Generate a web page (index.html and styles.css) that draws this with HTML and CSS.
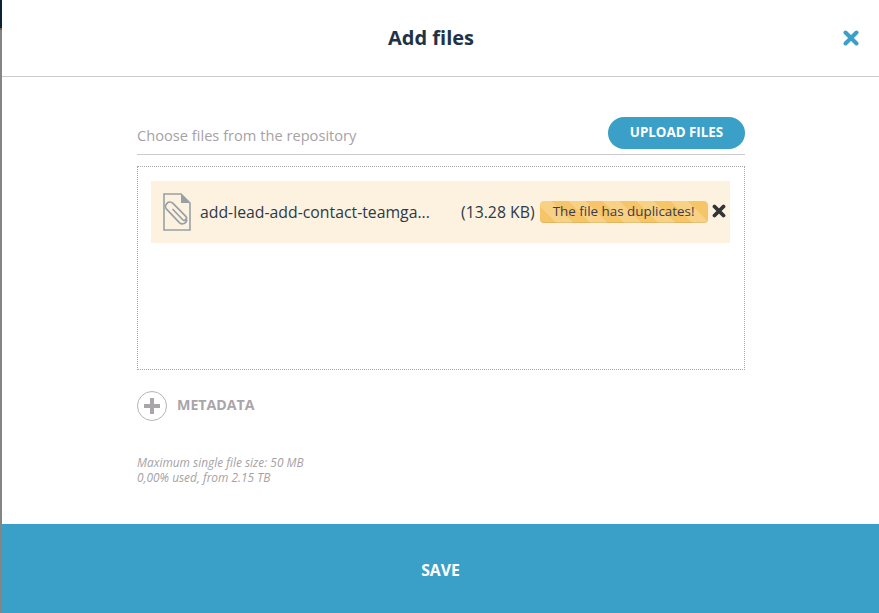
FILE: index.html
```html
<!DOCTYPE html>
<html lang="en">
<head>
<meta charset="utf-8">
<title>Add files</title>
<link rel="stylesheet" href="styles.css">
</head>
<body>
<div class="page">
  <div class="strip"><div class="strip-dark"></div><div class="strip-brown"></div></div>
  <div class="modal">
    <header class="header">
      <h1 class="title">Add files</h1>
      <svg class="close" width="16" height="16" viewBox="0 0 16 16"><path d="M2.5 2.5L13.5 13.5M13.5 2.5L2.5 13.5" stroke="#3aa0c8" stroke-width="4" stroke-linecap="round"/></svg>
    </header>
    <main class="body">
      <div class="repo-row">
        <span class="repo-label">Choose files from the repository</span>
        <button class="upload">UPLOAD FILES</button>
      </div>
      <div class="dropzone">
        <div class="file">
          <svg class="file-icon" width="28" height="38" viewBox="0 0 28 38" fill="none">
            <path d="M1 1H18L27 10V37H1Z" stroke="#98a0a6" stroke-width="1.6"/>
            <path d="M18 1L27 10H18Z" fill="#98a0a6"/>
            <path d="M10 16.5L19.5 26.5A2.2 2.2 0 0 0 22.8 23.4L10 10.4A4.3 4.3 0 0 0 3.8 16.4L16.6 29.8A4.5 4.5 0 0 0 23.8 27" stroke="#98a0a6" stroke-width="1.7" stroke-linecap="round"/>
          </svg>
          <span class="file-name">add-lead-add-contact-teamga...</span>
          <span class="file-size">(13.28 KB)</span>
          <span class="badge">The file has duplicates!</span>
          <svg class="remove" width="14" height="14" viewBox="0 0 14 14"><path d="M2.5 2.5L11.5 11.5M11.5 2.5L2.5 11.5" stroke="#333" stroke-width="3.8" stroke-linecap="round"/></svg>
        </div>
      </div>
      <div class="meta">
        <span class="plus"><svg width="16" height="16" viewBox="0 0 16 16"><path d="M8 0V16M0 8H16" stroke="#a9a5a9" stroke-width="4"/></svg></span>
        <span class="meta-label">METADATA</span>
      </div>
      <p class="limits">Maximum single file size: 50 MB<br>0,00% used, from 2.15 TB</p>
    </main>
    <footer class="footer">SAVE</footer>
  </div>
</div>
</body>
</html>
```
FILE: styles.css
```css
html, body { margin: 0; height: 100%; overflow: hidden; }
body { font-family: "Open Sans", "Liberation Sans", sans-serif; color: #2b3a4a; background: #fff; }
.page { display: flex; height: 613px; }
.strip { width: 2px; flex: none; background: #858585; display: flex; flex-direction: column; }
.strip-dark { height: 28px; background: #0c2238; }
.strip-brown { height: 2px; background: #7a5a3c; }
.modal { flex: 1; display: flex; flex-direction: column; min-width: 0; }
.header { height: 76px; flex: none; border-bottom: 1px solid #cccccc; display: flex; align-items: center; justify-content: center; padding-right: 19px; position: relative; }
.title { margin: 0; font-size: 20px; font-weight: 700; color: #1f3347; line-height: 1; }
.close { position: absolute; right: 20px; top: 30px; }
.body { flex: 1; padding: 40px 134px 0 135px; }
.repo-row { display: flex; justify-content: space-between; align-items: flex-end; height: 37px; border-bottom: 1px solid #cccccc; }
.repo-label { font-size: 14.65px; color: #a6a2a6; line-height: 20px; padding-bottom: 9px; }
.upload { width: 137px; height: 32px; margin-bottom: 5px; border: 0; border-radius: 16px; background: #3aa0c8; color: #fff; font: 700 13.35px/30px "Open Sans", sans-serif; padding: 0 0 2px; }
.dropzone { margin-top: 11px; height: 204px; border: 1px dotted #a8a8a8; padding: 14px 14px 0 13px; box-sizing: border-box; }
.file { height: 62px; background: #fdf2e0; display: flex; align-items: center; padding-left: 12px; }
.file-icon { flex: none; margin-right: 9px; width: 28px; }
.file-name { font-size: 15.8px; line-height: 20px; color: #2b3a4a; width: 261px; white-space: nowrap; }
.file-size { font-size: 15.8px; line-height: 20px; color: #2b3a4a; margin-right: 5px; }
.badge { width: 168px; height: 22px; box-sizing: border-box; border-radius: 4px; text-align: center; font-size: 13.4px; line-height: 20px; color: #3a3a50; box-shadow: inset 0 -1px 0 rgba(0,0,0,.08); background: repeating-linear-gradient(45deg, #f6c567 0 12px, #f9d184 12px 24px); margin-right: 4px; }
.remove { flex: none; margin-top: -2px; }
.meta { display: flex; align-items: center; margin-top: 21px; }
.plus { width: 28px; height: 28px; border: 1px solid #b5b5b5; border-radius: 50%; display: flex; align-items: center; justify-content: center; flex: none; }
.meta-label { margin-left: 10px; font-size: 14.2px; font-weight: 700; color: #a9a5a9; position: relative; top: -2px; }
.limits { margin: 34px 0 0; font-size: 11.9px; font-style: italic; line-height: 15px; color: #a6a2a6; }
.footer { height: 89px; flex: none; box-sizing: border-box; padding-top: 3px; background: #3aa0c8; color: #fff; font-size: 15.8px; font-weight: 700; display: flex; align-items: center; justify-content: center; }
```
